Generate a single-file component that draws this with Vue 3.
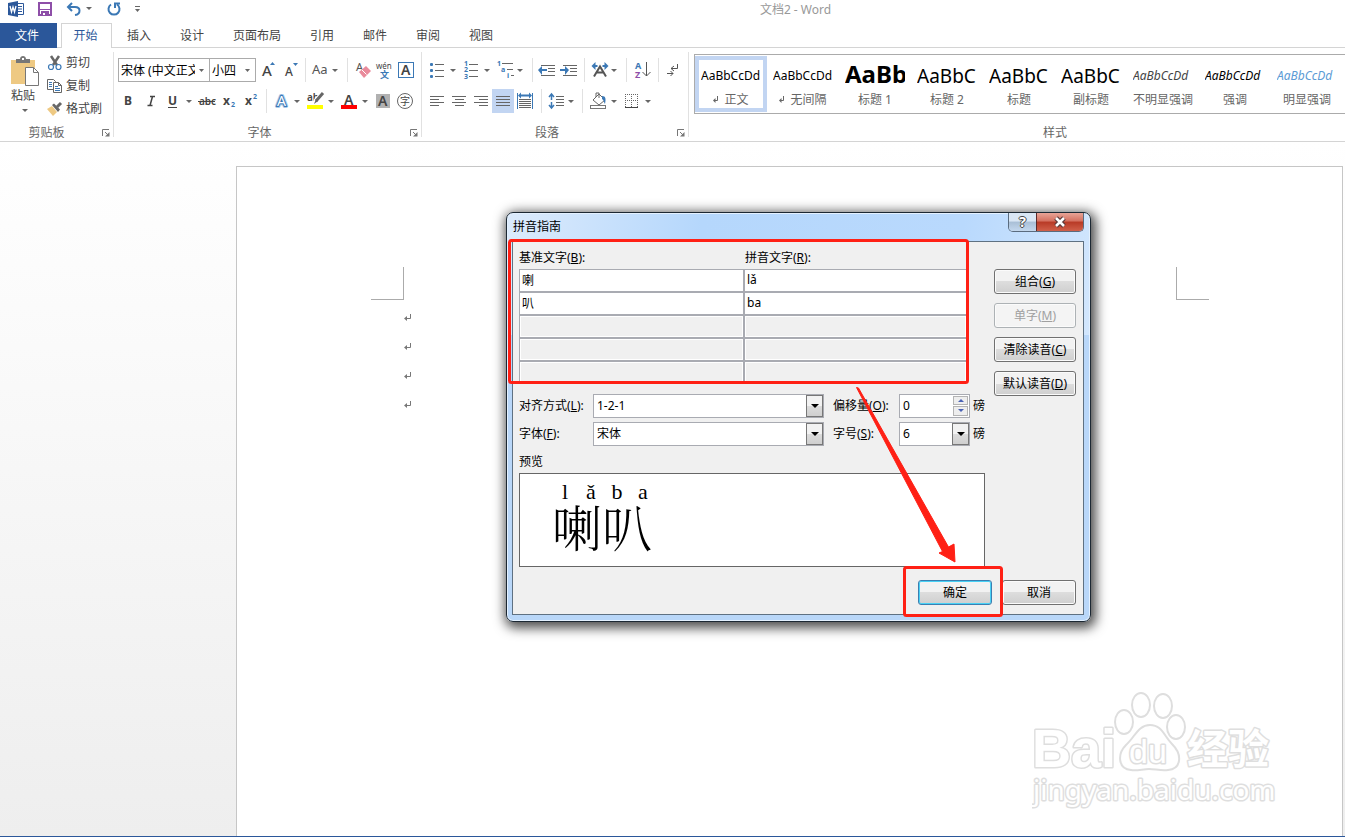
<script setup>
import { ref } from 'vue'

const tabs = ['插入', '设计', '页面布局', '引用', '邮件', '审阅', '视图']

const G = '#666'
const B = '#3b78b5'
const FONT = 'font-family="Noto Sans"'
const arrow = (x) => `<path d="M${x - 3} 11h6l-3 3z" fill="${G}"/>`
const lines = (rows) =>
  `<path d="${rows.map(([x, y, w]) => `M${x} ${y}h${w}`).join('')}" stroke="${G}" fill="none" shape-rendering="crispEdges"/>`
const letter = (t, x, y, size, extra = '') =>
  `<text x="${x}" y="${y}" font-size="${size}" ${FONT} ${extra || 'fill="#555"'}>${t}</text>`

const sep = (w = 8) => ({ sep: true, w })

const fontRow1 = [
  { n: '增大字号', w: 22, s: letter('A', 6, 18, 15, 'fill="#444" font-weight="500"') + `<path d="M14 7h5l-2.500-3z" fill="${B}"/>` },
  { n: '减小字号', w: 22, s: letter('A', 7, 18, 12, 'fill="#444" font-weight="500"') + `<path d="M15 5h5l-2.500 3z" fill="${B}"/>` },
  sep(10),
  { n: '更改大小写', w: 33, s: letter('Aa', 2, 16, 13) + arrow(25) },
  sep(),
  {
    n: '清除所有格式', w: 22,
    s: letter('A', 5, 13, 11) + '<path d="M8 14l7-6 5 5-7 7z" fill="#e98a9b"/><path d="M10.500 11.500l5 5" stroke="#fff"/>'
  },
  {
    n: '拼音指南', w: 22,
    s: letter('wén', 3, 11, 8, 'fill="#444"') + `<text x="7" y="20" font-size="9" font-family="Noto Sans CJK SC" font-weight="700" fill="${B}">文</text>`
  },
  { n: '字符边框', w: 22, s: `<rect x="3.500" y="4.500" width="15" height="15" fill="#fff" stroke="${B}"/>` + letter('A', 6, 17, 14, 'fill="#444" font-weight="600"') }
]

const fontRow2 = [
  { n: '加粗', w: 22, s: letter('B', 6, 16, 12, 'fill="#444" font-weight="700"') },
  { n: '倾斜', w: 22, s: '<path d="M10 7.500h5M7.500 16.500h5M12.500 7.500l-2.500 9" stroke="#444" stroke-width="1.500" fill="none"/>' },
  { n: '下划线', w: 34, s: letter('U', 6, 16, 12, 'fill="#444" font-weight="700"') + '<path d="M6 18.500h9" stroke="#444"/>' + arrow(27) },
  { n: '删除线', w: 22, s: letter('abc', 3, 16, 10, 'fill="#444" font-weight="600"') + '<path d="M2 12.500h17" stroke="#444"/>' },
  { n: '下标', w: 22, s: letter('x', 5, 16, 12, 'fill="#444" font-weight="700"') + letter('2', 13, 18, 7, `fill="${B}" font-weight="700"`) },
  { n: '上标', w: 22, s: letter('x', 5, 16, 12, 'fill="#444" font-weight="700"') + letter('2', 13, 10, 7, `fill="${B}" font-weight="700"`) },
  sep(),
  {
    n: '文本效果', w: 32,
    s: letter('A', 7, 17, 14, `fill="#fff" stroke="#a9caea" stroke-width="4" stroke-linejoin="round" paint-order="stroke"`) +
      letter('A', 7, 17, 14, `fill="#fff" stroke="${B}" stroke-width="2" paint-order="stroke"`) + arrow(27)
  },
  {
    n: '突出显示', w: 35,
    s: '<path d="M5 16h16v4H5z" fill="#ff0"/>' + letter('ab', 5, 12, 10, 'fill="#444" font-weight="600"') +
      '<path d="M21 4l-8 9" stroke="#fff" stroke-width="5"/><path d="M21 4l-7 8" stroke="#666" stroke-width="3"/><path d="M14 10l-2 5 4-3z" fill="#666"/>' + arrow(29)
  },
  { n: '字体颜色', w: 34, s: letter('A', 7, 16, 14, 'fill="#444" font-weight="600"') + '<path d="M4 16h16v4H4z" fill="red"/>' + arrow(28) },
  { n: '字符底纹', w: 23, s: '<path d="M5 5h14v14H5z" fill="#b1b1b1"/>' + letter('A', 7, 17, 14, 'fill="#444" font-weight="600"') },
  { n: '带圈字符', w: 22, s: '<circle cx="11" cy="12" r="7.500" fill="none" stroke="#666"/><text x="6" y="16" font-size="10" font-family="Noto Sans CJK SC" fill="#444">字</text>' }
]

const dots = [6, 12, 18].map((y) => `<rect x="4" y="${y - 1}" width="3" height="3" rx="1" fill="${B}"/>`).join('')
const nums = [['1', 8], ['2', 14], ['3', 21]].map(([t, y]) => letter(t, 4, y, 7, `fill="${B}" font-weight="700"`)).join('')
const leftArrow = `<path d="M2 12l4-4v3h5v2h-5v4z" fill="${B}"/>`
const rightArrow = `<path d="M11 12l-4-4v3h-5v2h5v4z" fill="${B}"/>`
const dented = lines([[5, 7.5, 14], [12, 10.5, 7], [12, 13.5, 7], [5, 17.5, 14]])

const paraRow1 = [
  { n: '项目符号', w: 34, s: dots + lines([[9, 6.5, 9], [9, 12.5, 9], [9, 18.5, 9]]) + arrow(27) },
  { n: '编号', w: 34, s: nums + lines([[9, 6.5, 9], [9, 12.5, 9], [9, 18.5, 9]]) + arrow(27) },
  {
    n: '多级列表', w: 34,
    s: letter('1', 3, 8, 7, `fill="${B}" font-weight="700"`) + letter('a', 7, 14, 7, `fill="${B}" font-weight="700"`) + letter('i', 13, 20, 7, `fill="${B}" font-weight="700"`) +
      lines([[8, 5.5, 11], [13, 11.5, 6], [17, 17.5, 3]]) + arrow(26)
  },
  sep(),
  { n: '减少缩进量', w: 22, s: dented + leftArrow },
  { n: '增加缩进量', w: 22, s: dented + rightArrow },
  sep(),
  {
    n: '中文版式', w: 34,
    s: `<path d="M3.500 8l4-4v3h2v2h-2v3zM20.500 8l-4-4v3h-2v2h2v3z" fill="${B}"/><path d="M6 18.500l6-10 6 10M8.500 14.500h7" stroke="#555" stroke-width="2" fill="none"/>` + arrow(26)
  },
  sep(),
  {
    n: '排序', w: 24,
    s: letter('A', 5, 11, 9, `fill="${B}" font-weight="700"`) + letter('Z', 5, 20, 9, 'fill="#8e4fa8" font-weight="700"') +
      '<path d="M16.500 4v14M12.500 14l4 4 4-4" stroke="#555" fill="none"/>'
  },
  sep(),
  {
    n: '显示编辑标记', w: 24,
    s: '<path d="M15.500 6v4.500H9M12 8l-3 2.500 3 2.500M5 15.500h6M8.500 13l2.500 2.500L8.500 18" stroke="#555" fill="none"/>'
  }
]

const align = (x1, x2) => lines([[4, 7.5, 14], [x1, 10.5, 9], [4, 13.5, 14], [x2, 16.5, 9]])
const paraRow2 = [
  { n: '左对齐', w: 22, s: align(4, 4) },
  { n: '居中', w: 22, s: align(7, 7) },
  { n: '右对齐', w: 22, s: align(9, 9) },
  { n: '两端对齐', w: 22, on: true, s: lines([[4, 7.5, 14], [4, 10.5, 14], [4, 13.5, 14], [4, 16.5, 14]]) },
  {
    n: '分散对齐', w: 22,
    s: `<path d="M3.500 4v16M18.500 4v16" stroke="${B}"/><path d="M4 6.500l3-3v2h8v-2l3 3-3 3v-2h-8v2z" fill="${B}"/>` +
      lines([[5, 10.5, 12], [5, 12.5, 12], [5, 14.5, 12], [5, 16.5, 12], [5, 18.5, 12]])
  },
  sep(10),
  {
    n: '行和段落间距', w: 31,
    s: `<path d="M5.500 5v6M5.500 13v6M3 8l2.500-3 2.500 3M3 16l2.500 3 2.500-3" stroke="${B}" stroke-width="1.500" fill="none"/>` +
      lines([[10, 7.5, 8], [10, 10.5, 8], [10, 13.5, 8], [10, 16.5, 8]]) + arrow(25)
  },
  sep(10),
  {
    n: '底纹', w: 34,
    s: '<path d="M6 11l6-6 6 6-6 5z" fill="#fff" stroke="#666"/><path d="M9 8V4h3v5" stroke="#666" fill="none"/>' +
      `<path d="M15 7c4 0 4 3 3 8-1-1-1-4-3-5z" fill="${B}"/><rect x="3.500" y="16.500" width="15" height="3" fill="#fff" stroke="#777"/>` + arrow(27)
  },
  {
    n: '边框', w: 34,
    s: '<path d="M4.500 5v13M10.500 5v13M16.500 5v13M4 5.500h13M4 11.500h13" stroke="#666" stroke-dasharray="1 1"/><path d="M4 18.500h13" stroke="#444"/>' + arrow(27)
  }
]

const toolGroups = [
  { name: '字体', cls: 'font-group', rows: [fontRow1, fontRow2], fonts: true },
  { name: '段落', cls: 'para-group', rows: [paraRow1, paraRow2], fonts: false }
]

const styles = [
  { s: 'AaBbCcDd', n: '正文', mark: true, c: 'normal', on: true },
  { s: 'AaBbCcDd', n: '无间隔', mark: true, c: 'normal' },
  { s: 'AaBb', n: '标题 1', c: 'h1' },
  { s: 'AaBbC', n: '标题 2', c: 'h2' },
  { s: 'AaBbC', n: '标题', c: 'h2' },
  { s: 'AaBbC', n: '副标题', c: 'h2' },
  { s: 'AaBbCcDd', n: '不明显强调', c: 'em soft' },
  { s: 'AaBbCcDd', n: '强调', c: 'em' },
  { s: 'AaBbCcDd', n: '明显强调', c: 'em blue' }
]

const rows = ref([
  { base: '喇', py: 'lǎ' },
  { base: '叭', py: 'ba' },
  { base: '', py: '' },
  { base: '', py: '' },
  { base: '', py: '' }
])

const sideButtons = [
  { t: '组合', k: 'G' },
  { t: '单字', k: 'M', off: true },
  { t: '清除读音', k: 'C' },
  { t: '默认读音', k: 'D' }
]
</script>

<template>
  <div class="word">
    <header class="titlebar">
      <div class="quick">
        <svg class="logo" width="16" height="16" viewBox="0 0 16 16" aria-hidden="true">
          <path d="M8 2.500h7.500v11H8" fill="#fff" stroke="#2b579a" />
          <path d="M10 5.500h4M10 8h4M10 10.500h4" stroke="#2b579a" />
          <path d="M0 2l10-2v16l-10-2z" fill="#2b579a" />
          <path d="M2 5l1.500 6L5 6l1.500 5L8 5" fill="none" stroke="#fff" stroke-width="1.300" />
        </svg>
        <button class="qbtn save" aria-label="保存">
          <svg width="14" height="14" viewBox="0 0 14 14">
            <path d="M1 1h12v12H1z" fill="#fff" stroke="#8e4fa8" stroke-width="2" />
            <path d="M1 7h12v1H1zM3 9h8v4H3z" fill="#8e4fa8" />
            <path d="M5 11h2v2H5z" fill="#fff" />
          </svg>
        </button>
        <button class="qbtn undo" aria-label="撤消">
          <svg width="26" height="14" viewBox="0 0 26 14">
            <path d="M6 1L2 5l4 4M2 5h7c6 0 6 7 0 8" fill="none" stroke="#3b78b5" stroke-width="2" />
            <path d="M20 5h6l-3 3z" fill="#666" />
          </svg>
        </button>
        <button class="qbtn redo" aria-label="恢复">
          <svg width="14" height="14" viewBox="0 0 14 14">
            <path d="M4 2.500a5.500 5.500 0 1 0 6 0M8 6V1.500h5" fill="none" stroke="#3b78b5" stroke-width="2" />
          </svg>
        </button>
        <button class="qbtn" aria-label="自定义快速访问工具栏">
          <svg width="8" height="8" viewBox="0 0 8 8"><path d="M1 1.500h5" stroke="#666" /><path d="M1 4h5l-2.500 3z" fill="#666" /></svg>
        </button>
      </div>
      <h1 class="doc-title">文档2 - Word</h1>
    </header>

    <nav class="tabs">
      <button class="tab file">文件</button>
      <button class="tab active">开始</button>
      <div class="rest">
        <button v-for="t in tabs" :key="t" class="tab">{{ t }}</button>
      </div>
    </nav>

    <section class="ribbon">
      <div class="group clip-group">
        <div class="clip">
          <button class="paste">
            <svg width="28" height="30" viewBox="0 0 28 30">
              <path d="M0 4h24v24H0z" fill="#eec983" />
              <path d="M5 7V3h4c0-4 6-4 6 0h4v4z" fill="#777" />
              <path d="M11 2h2v2h-2z" fill="#fff" />
              <path d="M14.500 11.500h8l5 5v13h-13z" fill="#fff" stroke="#777" />
              <path d="M22.500 11.500v5h5" fill="none" stroke="#777" />
            </svg>
            <span>粘贴</span>
            <svg width="6" height="4" viewBox="0 0 6 4"><path d="M0 0h6l-3 3z" fill="#666" /></svg>
          </button>
          <div class="clip-list">
            <button>
              <svg width="16" height="16" viewBox="0 0 16 16">
                <path d="M4 1l6 9M12 1l-6 9" stroke="#666" stroke-width="2.500" />
                <circle cx="4" cy="12" r="2.500" fill="#fff" stroke="#3b78b5" stroke-width="1.200" />
                <circle cx="11.500" cy="12" r="2.500" fill="#fff" stroke="#3b78b5" stroke-width="1.200" />
              </svg>剪切
            </button>
            <button>
              <svg width="16" height="16" viewBox="0 0 16 16">
                <path d="M.5 1.500h6l2 2v8h-8z" fill="#fff" stroke="#666" />
                <path d="M2 4.500h3M2 6.500h3M2 8.500h3" stroke="#3b78b5" />
                <path d="M6.500 4.500h5l3 3v7h-8z" fill="#fff" stroke="#666" />
                <path d="M11.500 4.500v3h3" fill="none" stroke="#666" />
                <path d="M8 8.500h3M8 10.500h5M8 12.500h5" stroke="#3b78b5" />
              </svg>复制
            </button>
            <button>
              <svg width="16" height="16" viewBox="0 0 16 16">
                <path d="M0 8l5-3 5 6-4 4z" fill="#eec983" />
                <path d="M5 4l2-1.500 6 6L11 11z" fill="#666" />
                <path d="M10 6l4-4" stroke="#666" stroke-width="3" />
              </svg>格式刷
            </button>
          </div>
        </div>
        <div class="caption">剪贴板</div>
        <button class="launch" aria-label="剪贴板选项">
          <svg width="8" height="8" viewBox="0 0 8 8"><path d="M.5 7V.5H7M3 3l3 3" stroke="#777" fill="none" /><path d="M7.500 3v4.500H3z" fill="#777" /></svg>
        </button>
      </div>

      <div v-for="g in toolGroups" :key="g.name" class="group" :class="g.cls">
        <div v-for="(row, i) in g.rows" :key="i" class="tools">
          <template v-if="g.fonts && i === 0">
            <label class="rsel family">
              <select aria-label="字体"><option>宋体 (中文正文)</option></select>
              <svg width="5" height="3" viewBox="0 0 5 3"><path d="M0 0h5L2.500 3z" fill="#666" /></svg>
            </label>
            <label class="rsel size">
              <select aria-label="字号"><option>小四</option></select>
              <svg width="5" height="3" viewBox="0 0 5 3"><path d="M0 0h5L2.500 3z" fill="#666" /></svg>
            </label>
          </template>
          <template v-for="(b, j) in row" :key="j">
            <span v-if="b.sep" class="sep" :style="{ width: b.w + 'px' }"></span>
            <button v-else class="tool" :class="{ on: b.on }" :aria-label="b.n">
              <svg :width="b.w" height="24" v-html="b.s"></svg>
            </button>
          </template>
        </div>
        <div class="caption">{{ g.name }}</div>
        <button class="launch" :aria-label="g.name + '选项'">
          <svg width="8" height="8" viewBox="0 0 8 8"><path d="M.5 7V.5H7M3 3l3 3" stroke="#777" fill="none" /><path d="M7.500 3v4.500H3z" fill="#777" /></svg>
        </button>
      </div>

      <div class="group style-group">
        <div class="gallery">
          <button v-for="s in styles" :key="s.n" class="style" :class="{ on: s.on }">
            <span class="sample" :class="s.c">{{ s.s }}</span>
            <span class="sname">
              <svg v-if="s.mark" width="6" height="7" viewBox="0 0 6 7"><path d="M4.500 0v4.500H2" stroke="#666" fill="none" /><path d="M0 4.500L2.500 2v5z" fill="#666" /></svg>
              {{ s.n }}
            </span>
          </button>
        </div>
        <div class="caption">样式</div>
      </div>
    </section>

    <main class="canvas">
      <div class="page">
        <div class="corners"><i class="corner tl"></i><i class="corner tr"></i></div>
        <div class="marks">
          <p v-for="n in 4" :key="n">
            <svg width="8" height="8" viewBox="0 0 8 8"><path d="M6.500 0v4.500H2" stroke="#777" fill="none" /><path d="M0 4.500l3-2.500v5z" fill="#777" /></svg>
          </p>
        </div>
      </div>

      <svg class="watermark" width="250" height="130" viewBox="0 0 250 130" role="img" aria-label="Baidu 经验">
        <g fill="#fff" stroke="#dedede" stroke-width="2">
          <ellipse cx="92" cy="41" rx="9" ry="12" />
          <ellipse cx="109" cy="24" rx="9" ry="12" />
          <ellipse cx="131" cy="25" rx="9" ry="12" />
          <ellipse cx="144" cy="46" rx="9" ry="12" />
          <path d="M118 44c12 0 14 11 22 19 11 11 9 25-4 26-7 1-13-1-19-1s-12 2-18 1c-13-1-14-16-5-25 9-8 12-20 24-20z" />
        </g>
        <g fill="#fff" stroke="#dedede" stroke-width="3" paint-order="stroke" stroke-linejoin="round">
          <text x="0" y="86" font-size="54" font-weight="700" font-family="Liberation Sans">Bai</text>
          <text x="97" y="82" font-size="34" font-family="Liberation Sans">du</text>
          <text x="155" y="83" font-size="41" font-weight="700" font-family="Noto Sans CJK SC">经验</text>
          <text x="1" y="119" font-size="28" font-family="Noto Sans">jingyan.baidu.com</text>
        </g>
      </svg>
    </main>
    <footer class="status"></footer>

    <section class="dialog" role="dialog" aria-labelledby="dlg-title">
      <header class="dlg-bar">
        <h2 id="dlg-title">拼音指南</h2>
        <div class="winbtns">
          <button class="help" aria-label="帮助">?</button>
          <button class="close" aria-label="关闭">
            <svg width="14" height="12" viewBox="0 0 14 12">
              <path d="M3 2l8 8M11 2l-8 8" stroke="#5b3a3a" stroke-width="5" />
              <path d="M3 2l8 8M11 2l-8 8" stroke="#fff" stroke-width="2.500" />
            </svg>
          </button>
        </div>
      </header>

      <div class="dlg-body">
        <div class="left">
          <div class="pairs-box">
            <table class="pairs">
              <thead>
                <tr><th class="base">基准文字(<u>B</u>):</th><th>拼音文字(<u>R</u>):</th></tr>
              </thead>
              <tbody>
                <tr v-for="(r, i) in rows" :key="i">
                  <td><input v-model="r.base" :disabled="i > 1" :aria-label="'基准文字 ' + (i + 1)" /></td>
                  <td><input v-model="r.py" :disabled="i > 1" :aria-label="'拼音文字 ' + (i + 1)" /></td>
                </tr>
              </tbody>
            </table>
          </div>

          <div class="form">
            <label for="al">对齐方式(<u>L</u>):</label>
            <div class="combo">
              <select id="al"><option>1-2-1</option></select>
              <span class="drop"></span>
            </div>
            <label for="off">偏移量(<u>O</u>):</label>
            <div class="combo spin">
              <input id="off" value="0" />
              <span class="steps">
                <button aria-label="增加"><i class="up"></i></button>
                <button aria-label="减少"><i class="down"></i></button>
              </span>
            </div>
            <span>磅</span>
            <label for="ff">字体(<u>F</u>):</label>
            <div class="combo">
              <select id="ff"><option>宋体</option></select>
              <span class="drop"></span>
            </div>
            <label for="fs">字号(<u>S</u>):</label>
            <div class="combo">
              <select id="fs"><option>6</option></select>
              <span class="drop"></span>
            </div>
            <span>磅</span>
          </div>

          <div class="plabel">预览</div>
          <div class="preview">
            <div class="pinyin"><span>l</span><span>ǎ</span><span>b</span><span>a</span></div>
            <div class="hanzi">喇叭</div>
          </div>
        </div>

        <div class="side">
          <button v-for="b in sideButtons" :key="b.k" class="btn" :disabled="b.off">{{ b.t }}(<u>{{ b.k }}</u>)</button>
        </div>

        <div class="actions">
          <button class="btn ok">确定</button>
          <button class="btn">取消</button>
        </div>
      </div>

      <svg class="notes" viewBox="0 0 585 410" aria-hidden="true">
        <g fill="none" stroke="#ff2015" stroke-width="3">
          <rect x="3.500" y="28.500" width="458" height="142" rx="2" />
          <rect x="398.500" y="355.500" width="97" height="48" rx="2" />
        </g>
        <path d="M350.500 175.500L352.500 176L442.500 335L448 332L449 350L433 341L436.500 339.500z" fill="#ff2015" stroke="#ff2015" stroke-width="1" />
      </svg>
    </section>
  </div>
</template>

<style>
body {
  margin: 0;
}
</style>

<style scoped>
.word,
.word * {
  box-sizing: border-box;
}
.word {
  position: relative;
  display: flex;
  flex-direction: column;
  min-height: 100vh;
  overflow: hidden;
  background: #fff;
  color: #444;
  font: 12px/16px "Noto Sans", "Noto Sans CJK SC", sans-serif;
}
button {
  padding: 0;
  border: 0;
  background: none;
  color: inherit;
  font: inherit;
}
svg {
  display: block;
  flex: none;
}
.titlebar {
  display: flex;
  height: 22px;
}
.quick {
  display: flex;
  align-items: center;
  height: 18px;
  padding-left: 8px;
}
.qbtn {
  margin-left: 13px;
}
.quick .save {
  margin-left: 14px;
}
.quick .undo {
  margin-left: 14px;
}
.quick .redo {
  margin-left: 15px;
}
.doc-title {
  flex: 1;
  margin: 0;
  padding-left: 104px;
  color: #999;
  font-size: 12px;
  font-weight: 400;
  line-height: 19px;
  text-align: center;
}
.tabs {
  display: flex;
  height: 26px;
  padding-top: 1px;
  border-bottom: 1px solid #d4d4d4;
}
.tab {
  height: 24px;
  line-height: 23px;
}
.file {
  width: 57px;
  height: 25px;
  padding-right: 3px;
  background: #2b579a;
  color: #fff;
}
.tab.active {
  width: 51px;
  height: 25px;
  margin-left: 4px;
  padding-right: 2px;
  border: 1px solid #d4d4d4;
  border-bottom: 0;
  background: #fff;
  color: #2b579a;
  line-height: 22px;
}
.rest {
  display: flex;
  gap: 29px;
  padding-left: 15px;
}
.ribbon {
  display: flex;
  height: 94px;
  border-bottom: 1px solid #d4d4d4;
}
.group {
  position: relative;
  display: flex;
  flex-direction: column;
  flex: none;
  margin: 4px 0;
  border-right: 1px solid #e1e1e1;
}
.clip-group {
  width: 114px;
}
.font-group {
  width: 308px;
  padding-left: 4px;
}
.para-group {
  width: 267px;
  padding-left: 4px;
}
.style-group {
  flex: 1;
  min-width: 0;
  border: 0;
}
.caption {
  margin: auto 0 -4px;
  padding-right: 20px;
  color: #666;
  text-align: center;
}
.style-group .caption {
  padding: 0 0 0 76px;
}
.launch {
  position: absolute;
  right: 3px;
  bottom: 0;
}
.clip {
  display: flex;
  padding: 0 0 0 11px;
}
.paste {
  display: flex;
  flex-direction: column;
  align-items: center;
  width: 28px;
  margin-top: 4px;
}
.paste span {
  width: 28px;
  margin: 2px 0 5px;
  text-align: left;
}
.clip-list {
  display: flex;
  flex-direction: column;
  gap: 7px;
  padding: 3px 0 0 8px;
}
.clip-list button {
  display: flex;
  gap: 3px;
}
.tools {
  display: flex;
  height: 24px;
  margin-top: 6px;
}
.tools + .tools {
  margin-top: 7px;
}
.tool.on {
  background: #c2d5f2;
}
.sep {
  flex: none;
  background: linear-gradient(#e1e1e1, #e1e1e1) center / 1px 100% no-repeat;
}
.rsel {
  position: relative;
  display: block;
  height: 24px;
  border: 1px solid #ababab;
  color: #000;
}
.rsel + .rsel {
  margin-left: -1px;
}
.family {
  width: 92px;
}
.size {
  width: 47px;
}
.rsel select {
  width: 100%;
  height: 24px;
  padding: 0 14px 0 2px;
  border: 0;
  appearance: none;
  background: none;
  color: #000;
  font: inherit;
  text-overflow: clip;
}
.rsel svg {
  position: absolute;
  right: 5px;
  top: 10px;
  pointer-events: none;
}
.gallery {
  display: flex;
  height: 60px;
  margin: 2px 0 0 5px;
  padding: 1px 0;
  overflow: hidden;
  border: 1px solid #ababab;
  border-right: 0;
}
.style {
  flex: none;
  width: 72px;
  border: 4px solid transparent;
  padding: 0 2px;
}
.style.on {
  border-color: #c2d5f2;
}
.sample {
  display: block;
  height: 31px;
  overflow: hidden;
  color: #000;
  line-height: 30px;
  text-align: left;
  white-space: nowrap;
}
.h1 {
  font-size: 24px;
  font-weight: 700;
  line-height: 26px;
}
.h2 {
  font-size: 19px;
}
.em {
  font-style: italic;
}
.soft {
  color: #444;
}
.blue {
  color: #5b9bd5;
}
.sname {
  display: flex;
  align-items: center;
  justify-content: center;
  gap: 5px;
  margin: 0 -4px;
  color: #666;
  white-space: nowrap;
}
.canvas {
  position: relative;
  display: flex;
  flex: 1;
  padding: 24px 2px 0 236px;
  background: linear-gradient(#fff, #eee);
}
.page {
  flex: 1;
  padding: 100px 133px 0 134px;
  border: 1px solid #c6c6c6;
  border-bottom: 0;
  background: #fff;
}
.corners {
  display: flex;
  justify-content: space-between;
}
.corner {
  width: 33px;
  height: 33px;
  border-bottom: 1px solid #ababab;
}
.tl {
  border-right: 1px solid #ababab;
}
.tr {
  border-left: 1px solid #ababab;
}
.marks {
  padding: 3px 0 0 33px;
}
.marks p {
  display: flex;
  align-items: center;
  height: 29px;
  margin: 0;
}
.status {
  height: 1px;
  background: #2b579a;
}
.watermark {
  position: absolute;
  right: 63px;
  bottom: 25px;
}
.dialog {
  position: absolute;
  left: 506px;
  top: 212px;
  width: 585px;
  padding: 0 6px 6px 5px;
  border: 1px solid #1c2833;
  border-radius: 7px;
  background: linear-gradient(#fff0 30%, #b9d7f9 30%), linear-gradient(100deg, #dcebfc, #b5d7fc 30%, #b9d9fd 70%, #dbebfd);
  box-shadow: inset 0 0 0 1px #e4f1ff, 2px 3px 12px 3px rgba(0, 0, 0, 0.7);
  color: #000;
}
.dlg-bar {
  display: flex;
  justify-content: space-between;
  height: 28px;
}
.dlg-bar h2 {
  margin: 0;
  padding-left: 1px;
  font-size: 12px;
  font-weight: 400;
  line-height: 27px;
}
.winbtns {
  display: flex;
  height: 19px;
  overflow: hidden;
  border: 1px solid #5a6b7e;
  border-top: 0;
  border-radius: 0 0 5px 5px;
}
.help {
  width: 27px;
  background: linear-gradient(#d9e6f4 45%, #a9bfd6 50%, #c4d8ee);
  color: #fff;
  font-size: 14px;
  font-weight: 700;
  line-height: 18px;
  text-shadow: 1px 0 #444, -1px 0 #444, 0 1px #444, 0 -1px #444;
}
.close {
  display: flex;
  align-items: center;
  justify-content: center;
  width: 47px;
  border-left: 1px solid #5a2a2a;
  background: linear-gradient(#e8a497 0, #d4705f 45%, #b83a26 50%, #d0604a);
}
.dlg-body {
  display: grid;
  grid-template-columns: 1fr 82px;
  column-gap: 9px;
  padding: 8px 7px 9px 6px;
  border: 1px solid #5f7182;
  background: #f0f0f0;
}
.pairs-box {
  height: 133px;
  overflow: hidden;
}
.pairs {
  width: 449px;
  border-collapse: separate;
  border-spacing: 0;
  table-layout: fixed;
}
.pairs th {
  height: 19px;
  padding: 0 0 3px;
  font-weight: 400;
  text-align: left;
}
.pairs .base {
  width: 226px;
}
.pairs td {
  padding: 0;
  border: solid #a9abb2;
  border-width: 0 2px 2px 0;
}
.pairs tr:first-child td {
  border-top-width: 1px;
}
.pairs td:first-child {
  border-left-width: 1px;
}
.pairs input {
  display: block;
  width: 100%;
  height: 21px;
  padding: 0 1px 2px;
  border: 1px solid #fff;
  border-radius: 0;
  background: #fff;
  color: #000;
  font: inherit;
}
.pairs input:disabled {
  background: #f0f0f0;
}
.form {
  display: grid;
  grid-template-columns: 68px 231px 63px 71px auto;
  grid-auto-rows: 25px;
  row-gap: 3px;
  align-items: center;
  column-gap: 6px;
  margin: 10px -9px 0 0;
  white-space: nowrap;
}
.form > :nth-child(5n + 3) {
  padding-left: 3px;
}
.form > :nth-child(5n) {
  margin-left: -3px;
}
.combo {
  display: flex;
  height: 24px;
  border: 1px solid #a9abb2;
  background: #fff;
}
.combo select,
.combo input {
  flex: 1;
  min-width: 0;
  padding: 0 3px;
  border: 0;
  appearance: none;
  background: none;
  color: #000;
  font: inherit;
}
.drop {
  display: flex;
  align-items: center;
  justify-content: center;
  width: 17px;
  margin-left: -17px;
  border: 1px solid #777;
  background: linear-gradient(#f2f2f2 50%, #dcdcdc 50%, #cfcfcf);
  pointer-events: none;
}
.drop::after {
  border: 4px solid transparent;
  border-top-color: #000;
  border-bottom: 0;
  content: "";
}
.steps {
  display: flex;
  flex-direction: column;
  gap: 1px;
  width: 17px;
  padding: 1px;
}
.steps button {
  display: flex;
  flex: 1;
  align-items: center;
  justify-content: center;
  border: 1px solid #b4b4b4;
  background: #eee;
}
.up,
.down {
  border: 3px solid transparent;
}
.up {
  border-top: 0;
  border-bottom-color: #4a63b5;
}
.down {
  border-bottom: 0;
  border-top-color: #4a63b5;
}
.plabel {
  margin: 8px 0 3px;
}
.preview {
  height: 94px;
  padding: 5px 0 0 32px;
  border: 1px solid #666;
  background: #fff;
}
.pinyin {
  display: grid;
  grid-template-columns: repeat(4, 26px);
  font: 22px/26px "Liberation Serif", serif;
  text-align: center;
}
.hanzi {
  font: 300 50px/40px "Noto Serif CJK SC", "Noto Sans CJK SC", serif;
}
.side {
  display: flex;
  flex-direction: column;
  gap: 9px;
  padding-top: 19px;
}
.btn {
  height: 25px;
  border: 1px solid #707070;
  border-radius: 3px;
  background: linear-gradient(#f2f2f2 50%, #ddd 50%, #cfcfcf);
  box-shadow: inset 0 0 0 1px #fbfbfb;
  white-space: nowrap;
}
.btn:disabled {
  border-color: #adb2b5;
  background: #f4f4f4;
  color: #a0a0a0;
}
.actions {
  display: flex;
  grid-column: 1 / -1;
  justify-content: flex-end;
  gap: 10px;
  margin-top: 13px;
}
.actions .btn {
  width: 74px;
  padding-top: 1px;
}
.btn.ok {
  border-color: #3c7fb1;
  box-shadow: inset 0 0 0 1px #48d1f5;
}
.notes {
  position: absolute;
  left: -1px;
  top: -1px;
  width: 585px;
  height: 410px;
  pointer-events: none;
}
</style>
